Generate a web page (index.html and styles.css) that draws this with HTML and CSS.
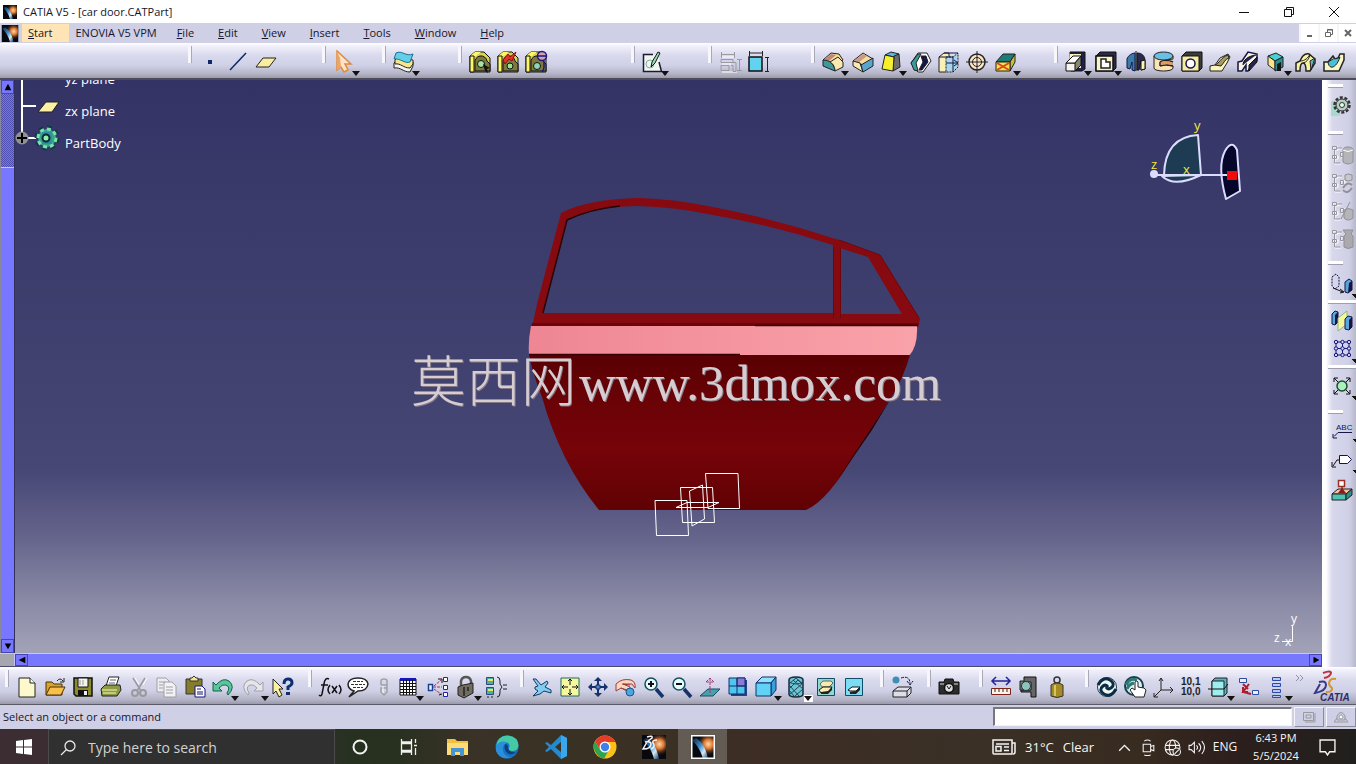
FILE: index.html
```html
<!DOCTYPE html>
<html lang="en">
<head>
<meta charset="utf-8">
<meta name="viewport" content="width=device-width, initial-scale=1">
<title>CATIA V5 - [car door.CATPart]</title>
<link rel="stylesheet" href="styles.css">
</head>
<body>
<svg class="defs" aria-hidden="true">
  <defs>
    <radialGradient id="flame" cx="0.72" cy="0.38" r="0.5">
      <stop offset="0" stop-color="#ffd9a8"/><stop offset="0.4" stop-color="#d9752f"/><stop offset="1" stop-color="#0a0c14" stop-opacity="0"/>
    </radialGradient>
    <linearGradient id="beam" x1="0" y1="0" x2="1" y2="1">
      <stop offset="0" stop-color="#0a1830"/><stop offset="0.45" stop-color="#3f8fd0"/><stop offset="0.7" stop-color="#d8ecf8"/><stop offset="1" stop-color="#11385c"/>
    </linearGradient>
    <symbol id="catia" viewBox="0 0 24 24">
      <path fill="#07090f" d="M0 0h24v24H0z"/>
      <path fill="url(#flame)" d="M0 0h24v24H0z"/>
      <path fill="url(#beam)" d="M1 5 5 3c6 4 10 10 12 21h-5C10 16 6 10 1 5z"/>
    </symbol>
    <symbol id="body-link" viewBox="0 0 24 24">
      <path d="M3 4h5v3H3zM3 13h5v3H3zM5 8v13h6M8 6h4M11 10h4v4h-4z" fill="none" stroke="#fff"/>
      <path d="M2.500 3.500h4v3h-4zM2.500 12.500h4v3h-4zM4.500 7v13h6M7 5h5M10.500 9.500h3v4h-3z" fill="none" stroke="#96969c"/>
    </symbol>
    <symbol id="cube-gold" viewBox="0 0 24 24">
      <path d="M2 6l5-4h9l6 6v14H2z" fill="#d8d252" stroke="#111"/>
      <path d="M2 6l5-4h6l-5 4z" fill="#fdf66a"/><path d="M2 6h4v16H2z" fill="#fdf66a" stroke="#111"/>
      <path d="M7 21V13a6 6 0 0 1 12-2l3 3v7z" fill="#7d783c" stroke="#111"/>
    </symbol>
  </defs>
</svg>

<header class="title-bar">
  <svg class="app-icon" viewBox="0 0 24 24"><use href="#catia"/></svg>
  <h1 class="title">CATIA V5 - [car door.CATPart]</h1>
  <div class="window-buttons">
    <button class="window-button" aria-label="Minimize"><svg viewBox="0 0 12 12"><path d="M1 6.500h10" stroke="#111" fill="none"/></svg></button>
    <button class="window-button" aria-label="Restore"><svg viewBox="0 0 12 12"><path d="M1.500 3.500h7v7h-7zM3.500 3V1.500h7v7H9" stroke="#111" fill="none"/></svg></button>
    <button class="window-button" aria-label="Close"><svg viewBox="0 0 12 12"><path d="M1 1l10 10M11 1L1 11" stroke="#111" fill="none"/></svg></button>
  </div>
</header>

<nav class="menu-bar" aria-label="Menu">
  <svg class="menu-icon" viewBox="0 0 24 24"><use href="#catia"/></svg>
  <button class="menu menu-start"><u>S</u>tart</button>
  <button class="menu menu-vpm">ENOVIA V5 VPM</button>
  <button class="menu"><u>F</u>ile</button>
  <button class="menu"><u>E</u>dit</button>
  <button class="menu"><u>V</u>iew</button>
  <button class="menu"><u>I</u>nsert</button>
  <button class="menu"><u>T</u>ools</button>
  <button class="menu"><u>W</u>indow</button>
  <button class="menu"><u>H</u>elp</button>
  <div class="document-buttons">
    <button class="document-button" aria-label="Minimize document"><svg viewBox="0 0 10 10"><path d="M2 8h5" stroke="#666" stroke-width="2"/></svg></button>
    <button class="document-button" aria-label="Restore document"><svg viewBox="0 0 10 10"><path d="M1.500 4.500h5v4h-5zM3.500 4V1.500h5v5H7M3 2h6" stroke="#666" fill="none"/></svg></button>
    <button class="document-button" aria-label="Close document"><svg viewBox="0 0 10 10"><path d="M2 2l6 6M8 2L2 8" stroke="#666" stroke-width="2"/></svg></button>
  </div>
</nav>

<div class="toolbar toolbar-top" role="toolbar" aria-label="Part design">
  <div class="group">
    <button class="tool" aria-label="Point"><svg viewBox="0 0 24 24"><path d="M10 10h4v4h-4z" fill="#0b2a66"/></svg></button>
    <button class="tool" aria-label="Line"><svg viewBox="0 0 24 24"><path d="M4 20 20 3" stroke="#0b2a66" stroke-width="1.500"/></svg></button>
    <button class="tool" aria-label="Plane"><svg viewBox="0 0 24 24"><path d="M2 17 9 8h13l-7 9z" fill="#f8eda0" stroke="#222"/></svg></button>
  </div>
  <div class="group">
    <button class="tool drop" aria-label="Select"><svg viewBox="0 0 24 24"><path d="M5 1v19l4-3 3 5 4-2-3-6h6z" fill="#fbe3cc" stroke="#e08a3c" stroke-width="1.500"/><path d="M5 1v19l4-3-1-9z" fill="#f0a464"/></svg></button>
  </div>
  <div class="group">
    <button class="tool drop" aria-label="Geometrical set"><svg viewBox="0 0 24 24"><path d="M2 13l3-3 16 2v4l-3 6c-7 0-9-5-16-4z" fill="#f4f4ec" stroke="#222"/><path d="M3 10l2-2 16 2v4l-3 4c-7 0-9-5-15-4z" fill="#f8e48a" stroke="#222"/><path d="M4 3c6-3 10 4 17 1l-3 8C13 14 8 8 2 9z" fill="#62d0ea" stroke="#1c6f8c"/></svg></button>
  </div>
  <div class="group">
    <button class="tool" aria-label="Link"><svg viewBox="0 0 24 24"><use href="#cube-gold"/><circle cx="13" cy="14" r="3.500" fill="#a5e3a0" stroke="#111"/><path d="M15 14l7 4-3 1 1 4-3-2z" fill="#111"/></svg></button>
    <button class="tool" aria-label="Unlink"><svg viewBox="0 0 24 24"><use href="#cube-gold"/><path d="M7 10l5-6 2 3 6-5-4 9-3-2-4 5z" fill="#e3342b" stroke="#8c1210"/><circle cx="14" cy="16" r="3" fill="#9be28c" stroke="#111"/></svg></button>
    <button class="tool" aria-label="Browse link"><svg viewBox="0 0 24 24"><use href="#cube-gold"/><circle cx="13" cy="16" r="3.500" fill="#8fd5b8" stroke="#111"/><circle cx="18" cy="6" r="4.500" fill="#d0a0ac" stroke="#181880" stroke-width="1.500"/><path d="M14 6h8M20 11v6q0 3-2 5" fill="none" stroke="#181880" stroke-width="1.500"/></svg></button>
  </div>
  <div class="group">
    <button class="tool drop" aria-label="Sketch"><svg viewBox="0 0 24 24"><path d="M2.500 4.500h15l3 17h-18z" fill="#f1f5f0"/><path d="M12 4.500H2.500v17h18L18 12" fill="none" stroke="#1b1b2e" stroke-width="1.500"/><circle cx="9" cy="14" r="4" fill="none" stroke="#7fae9b"/><path d="M10 17l1-5 6-10 2 1-5 10z" fill="#9db" stroke="#111"/></svg></button>
  </div>
  <div class="group">
    <button class="tool" aria-label="Measure set" disabled><svg viewBox="0 0 24 24"><path d="M3 7h13M4 14h9M4 22h15" stroke="#fff"/><path d="M3.500 2v6M16.500 2v6M3 4.500h13M3 9.500h12v3H3zM3 15.500h8v5H3zM13 12.500h5v9h-3v-6h-2M21.500 9v12M19 9.500h5M19 20.500h5" fill="none" stroke="#99999f"/></svg></button>
    <button class="tool" aria-label="Dimension"><svg viewBox="0 0 24 24"><path d="M3 3h13M3.500 1v5M16.500 1v5M21.500 7v14M19 7.500h4M19 21.500h4" stroke="#222" fill="none"/><path d="M3 7h13v14H3z" fill="#62d3ee" stroke="#111" stroke-width="1.500"/></svg></button>
  </div>
  <div class="group">
    <button class="tool drop" aria-label="Edge fillet"><svg viewBox="0 0 24 24"><path d="M2 10l8-7 8 1 4 6-8 4z" fill="#f8d99a" stroke="#222"/><path d="M3 10l7-6 5 1-7 6z" fill="#b9897e"/><path d="M2 10c6 0 11 3 12 11L2 16z" fill="#3c9a9c" stroke="#222"/><path d="M14 21c0-5-3-8-5-9l8-5 5 5v5z" fill="#f8e9b0" stroke="#222"/></svg></button>
    <button class="tool" aria-label="Chamfer"><svg viewBox="0 0 24 24"><path d="M2 11 12 3l10 6-10 6z" fill="#f8dc9c" stroke="#222"/><path d="M3 11l9-7 4 2-9 7z" fill="#c99a85"/><path d="M2 11l7 2 3 9-10-6z" fill="#fbe9b4" stroke="#222"/><path d="M10 15l12-7v8l-10 6z" fill="#58a6cf" stroke="#222"/></svg></button>
    <button class="tool drop" aria-label="Draft angle"><svg viewBox="0 0 24 24"><path d="M6 5l6-3 8 2-5 3z" fill="#58b8e4" stroke="#222"/><path d="M15 6l5-2 1 13-7 4z" fill="#6c6c6c" stroke="#222"/><path d="M6 5l9 2-1 14-11-2z" fill="#f6ef2c" stroke="#222"/></svg></button>
    <button class="tool" aria-label="Shell"><svg viewBox="0 0 24 24"><path d="M2 13 9 3h9l4 8-8 11H9z" fill="#fff" stroke="#222"/><path d="M2 13l7-9h3l-5 9 2 8-4-1z" fill="#3b9c9c" stroke="#222"/><path d="M12 6h5l2 6-6 8h-3l4-8z" fill="#15154a" stroke="#222"/></svg></button>
    <button class="tool" aria-label="Thickness"><svg viewBox="0 0 24 24"><path d="M2 7l5-4h5v15l-3 4H2z" fill="#f8efb4" stroke="#222"/><path d="M9 7h7l5-4v14l-5 5H9z" fill="#a9d4ea" stroke="#222" stroke-dasharray="2 1"/><path d="M2 7h14v15M7 3h14M9 13h11M17 10l4 3-4 3" fill="none" stroke="#15154a"/></svg></button>
    <button class="tool" aria-label="Thread"><svg viewBox="0 0 24 24"><circle cx="12" cy="12" r="8" fill="#fbe6c8" stroke="#222" stroke-width="1.500"/><circle cx="12" cy="12" r="4.500" fill="none" stroke="#222"/><path d="M12 1v22M1 12h22" stroke="#222"/></svg></button>
    <button class="tool drop" aria-label="Remove face"><svg viewBox="0 0 24 24"><path d="M3 12l7-8h12l-5 8z" fill="#1f7b78" stroke="#222"/><path d="M17 12l5-8v8l-5 9z" fill="#c9c034" stroke="#222"/><path d="M3 12h14v9H3z" fill="#fbe14c" stroke="#222"/><path d="M4 13l12 7M16 13L4 20" stroke="#d84a1c" stroke-width="2"/></svg></button>
  </div>
  <div class="group">
    <button class="tool drop" aria-label="Pad"><svg viewBox="0 0 24 24"><path d="M6 2h15v17l-3 2H7z" fill="#20204e" stroke="#111"/><path d="M6 4h11v14H6z" fill="#fbf3c0"/><path d="M2 13h9l6-6v8l-6 6H2z" fill="#f5f4ee" stroke="#111"/><path d="M2 13l7-7h8l-6 7z" fill="#fff" stroke="#111"/><path d="M11 13l6-7v9l-6 6z" fill="#888872" stroke="#111"/></svg></button>
    <button class="tool drop" aria-label="Pocket"><svg viewBox="0 0 24 24"><path d="M2 6l4-4h16v16l-3 3H2z" fill="#2a2a48" stroke="#111"/><path d="M2 6h17v15H2z" fill="#fbf3c0" stroke="#111" stroke-width="1.500"/><path d="M7 9h5v3h4v6H7z" fill="#fff" stroke="#222" stroke-width="1.500"/></svg></button>
    <button class="tool" aria-label="Shaft"><svg viewBox="0 0 24 24"><path d="M3 9c1-4 6-6 8-6v18l-3-1v-8l-2 7-3-1z" fill="#3a7ca8" stroke="#15154a"/><path d="M13 3c5 0 8 3 8 8v8l-4 1v-9l-2 9h-2z" fill="#2a2a50" stroke="#111"/><path d="M17 11l4-1v9l-4 1z" fill="#fff3b8" stroke="#111"/><path d="M12 1v20" stroke="#111"/></svg></button>
    <button class="tool" aria-label="Groove"><svg viewBox="0 0 24 24"><path d="M2 6v12c0 4 19 4 19 0v-2l-6-1v-5l6-1V6z" fill="#fbe3b4" stroke="#222"/><ellipse cx="11.500" cy="6" rx="9.500" ry="4" fill="#69bfe6" stroke="#222"/><path d="M8 12c3-2 9-2 13 0M8 16c3-1 9-1 13 0M8 12v4" fill="none" stroke="#222" stroke-width="1.500"/><path d="M9 12c3-1 8-1 12 1v2c-4-1-9-1-12 0z" fill="#e59a58"/></svg></button>
    <button class="tool" aria-label="Hole"><svg viewBox="0 0 24 24"><path d="M2 6l4-4h16v16l-3 3H2z" fill="#3b3b3b" stroke="#111"/><path d="M2 6h17v15H2z" fill="#f8eca4" stroke="#111"/><circle cx="10.500" cy="13.500" r="4.500" fill="#fff" stroke="#15154a" stroke-width="1.500"/></svg></button>
    <button class="tool" aria-label="Rib"><svg viewBox="0 0 24 24"><path d="M2 21v-5l5-1 5-7 8-4 2 3-3 6-5 8z" fill="#fbf3bc" stroke="#222"/><path d="M7 15c4-1 6-8 13-10l1 3c-4 1-5 5-8 8z" fill="#a59a60" stroke="#222"/></svg></button>
    <button class="tool" aria-label="Slot"><svg viewBox="0 0 24 24"><path d="M2 21v-9l4-1 6-9 9 2v6l-5 4-4 7h-2v-6l-4 6z" fill="#f8f4e0" stroke="#15154a" stroke-width="1.500"/><path d="M7 15c0-5 5-9 13-10M13 15l8-8v5l-8 9z" fill="#242452" stroke="#111"/></svg></button>
    <button class="tool drop" aria-label="Solid combine"><svg viewBox="0 0 24 24"><path d="M4 6l8-3 7 4-8 4z" fill="#45d1d4" stroke="#222"/><path d="M4 6l7 5v9l-7-5z" fill="#f7e58c" stroke="#222"/><path d="M11 11l8-4v10l-8 4z" fill="#2c8f92" stroke="#222"/><path d="M13 14l4-2v9h-4z" fill="#151515"/></svg></button>
    <button class="tool" aria-label="Multi-section solid"><svg viewBox="0 0 24 24"><path d="M2 21V13l4-2c2-5 5-8 9-7l6 5v4l-5 8h-4c0-5-1-8-3-8s-3 3-3 8z" fill="#fbf3a0" stroke="#222" stroke-width="1.500"/><path d="M16 11l5-3-4 12z" fill="#58bcd0" stroke="#222"/><path d="M6 11c5 0 8-3 10-7M9 13q5-1 7-8" fill="none" stroke="#222"/></svg></button>
    <button class="tool" aria-label="Removed multi-section"><svg viewBox="0 0 24 24"><path d="M2 21V12h4l5-6 2 3 3-1 2-4h4v6l-5 11z" fill="#fbf6c8" stroke="#222" stroke-width="1.500"/><path d="M6 12c1 8 8 7 12-5-4 3-6 1-7 2z" fill="#48c1d8" stroke="#222"/></svg></button>
  </div>
</div>

<main class="workspace">
  <div class="scroll scroll-v">
    <button class="scroll-button" aria-label="Scroll up"><svg viewBox="0 0 12 12"><path d="M6 2l4 8H2z"/></svg></button>
    <div class="trough"></div>
    <div class="thumb"></div>
    <button class="scroll-button" aria-label="Scroll down"><svg viewBox="0 0 12 12"><path d="M6 10L2 3h8z"/></svg></button>
  </div>

  <section class="viewport" aria-label="Part view">
    <svg class="scene" viewBox="15 80 1307 573" role="img" aria-label="Car door model">
      <defs>
        <linearGradient id="panel" x1="0" y1="355" x2="0" y2="510" gradientUnits="userSpaceOnUse">
          <stop offset="0" stop-color="#580003"/><stop offset="0.25" stop-color="#680206"/><stop offset="0.6" stop-color="#760409"/><stop offset="1" stop-color="#600104"/>
        </linearGradient>
        <linearGradient id="belt"><stop offset="0" stop-color="#ee8693"/><stop offset="1" stop-color="#faa2a9"/></linearGradient>
      </defs>
      <path fill="#870a10" fill-rule="evenodd" d="M561 213Q588 199 639 198Q675 199 713 207Q775 219 839 240L880 255L920 319L918 327H532L538 300ZM568 219L543 313H833V245Q775 226 713 215Q675 207 639 206Q600 206 568 219ZM840 248V314H902L868 257Z"/>
      <path fill="none" stroke="#240408" stroke-width="1.500" d="M543 313L567 220Q590 209 620 206"/>
      <path fill="none" stroke="#6e070a" d="M839 240L880 255L919 318M840.500 248V318M833.500 246V318"/>
      <path fill="#6b0508" d="M532 323H919L918 327H531Z"/>
      <path fill="url(#belt)" d="M531 326H917Q918 346 909 356L529 355Q528 340 531 326Z"/>
      <path fill="url(#panel)" d="M529 354H740L740 355H910Q904 376 894 393L857 450Q829 500 806 510H599Q560 462 542 397Q532 372 529 354Z"/>
      <path fill="#2a0003" d="M893 395L860 445L836 482L872 430Z"/>
      <path fill="none" stroke="#340004" stroke-width="1.500" d="M529 354.500H740M755 325.500H917"/>
      <g fill="none" stroke="#fff">
        <path d="M655 500.500H687L688.500 535.500H656.500Z"/><path d="M680.500 487.500H712.500L714.500 522.500H682.500Z"/>
        <path d="M705.500 473.500H738L739.500 508.500H708Z"/><path d="M689.500 491L702.500 485L704.500 519L692 526Z"/><path d="M676 507.500L687 502.500H719L708 507.500Z"/>
      </g>
      <g stroke="#dcdcff" stroke-width="2" stroke-linejoin="round">
        <path fill="#1d3b52" d="M1164 175Q1165 137 1198 135L1201 175Z"/>
        <path fill="#1d3b52" d="M1162 176Q1174 188 1201 175Z"/>
        <path fill="#06062a" d="M1226 199Q1217 166 1225 151Q1232 139 1237 150L1240 191Z"/>
        <path d="M1154 175H1232"/>
      </g>
      <circle cx="1154" cy="174" r="4" fill="#dcdcff"/>
      <path fill="#f00b0b" d="M1227 171h10v9h-10z"/>
      <g class="compass-label"><text x="1194" y="130">y</text><text x="1151" y="169">z</text><text x="1183" y="174">x</text></g>
      <path fill="none" stroke="#fff" d="M1292.500 625V641.500H1282"/>
      <g class="axis-label"><text x="1291" y="623">y</text><text x="1274" y="642">z</text><text x="1285" y="646">x</text></g>
      <g class="watermark-shadow"><text x="412" y="402" class="watermark-cjk">莫西网</text><text x="580" y="401" class="watermark-latin">www.3dmox.com</text></g>
      <g class="watermark"><text x="411" y="401" class="watermark-cjk">莫西网</text><text x="579" y="400" class="watermark-latin">www.3dmox.com</text></g>
    </svg>
    <ul class="tree">
      <li class="node"><svg class="node-icon" viewBox="0 0 44 32"><path d="M5 0v32" stroke="#fff" stroke-width="2"/></svg>yz plane</li>
      <li class="node"><svg class="node-icon" viewBox="0 0 44 32"><path d="M5 0v32M5 11h14" stroke="#fff" stroke-width="2"/><path d="M21 17l8-10h13l-7 10z" fill="#fdf0a4" stroke="#222"/></svg>zx plane</li>
      <li class="node"><svg class="node-icon" viewBox="0 0 44 32"><path d="M5 0v12M5 11h14" stroke="#fff" stroke-width="2"/><circle cx="5" cy="11" r="6.500" fill="#8f8f94"/><path d="M5 6v10M0 11h10" stroke="#000" stroke-width="2"/><circle cx="30" cy="11" r="10" fill="none" stroke="#0c3c46" stroke-width="5" stroke-dasharray="4.500 3.300"/><circle cx="30" cy="11" r="9" fill="#37a586" stroke="#7ee0b0" stroke-width="3" stroke-dasharray="4 3"/><path d="M25 5h10v12H25z" fill="#2d8fa0"/><circle cx="29" cy="11" r="3.500" fill="#8ff0b0" stroke="#0b2c33" stroke-width="2"/></svg>PartBody</li>
    </ul>
  </section>

  <aside class="side-bar" aria-label="Body tools">
    <div class="side-group side-gear"><button class="side-tool" aria-label="Part body"><svg viewBox="0 0 24 24"><path d="M1 7h9v15H1z" fill="#a9d8cf"/><circle cx="12" cy="11" r="7.500" fill="none" stroke="#333" stroke-width="2.500" stroke-dasharray="3 1.700"/><circle cx="12" cy="11" r="6" fill="#b9c9c4" stroke="#333"/><circle cx="12" cy="11" r="2.500" fill="#dfe" stroke="#333"/></svg></button></div>
    <div class="side-group side-boolean">
      <button class="side-tool" aria-label="Assemble" disabled><svg viewBox="0 0 24 24"><use href="#body-link"/><path d="M13 7q0-3 5-3t5 3v12q-5 4-10 0z" fill="#b5b5b9" stroke="#8f8f94"/><path d="M13 7q5 3 10 0" fill="none" stroke="#fff"/></svg></button>
      <button class="side-tool" aria-label="Add" disabled><svg viewBox="0 0 24 24"><use href="#body-link"/><path d="M15 4q3-2 7 0v5q-4 2-7 0z" fill="#c9c9cd" stroke="#8f8f94"/><path d="M13 17q4-7 9-3M22 17q-5 7-9 2" fill="none" stroke="#8f8f94" stroke-width="2"/></svg></button>
      <button class="side-tool" aria-label="Remove" disabled><svg viewBox="0 0 24 24"><use href="#body-link"/><path d="M14 11q5-3 9 0v8q-5 4-9 0zM11 20L20 3" fill="#b5b5b9" stroke="#8f8f94"/></svg></button>
      <button class="side-tool" aria-label="Union trim" disabled><svg viewBox="0 0 24 24"><use href="#body-link"/><path d="M13 3h10l-2 4 2 2v11q-5 3-9 0V9l2-2z" fill="#aaaaae" stroke="#8f8f94"/></svg></button>
    </div>
    <div class="side-group side-translate"><button class="side-tool side-drop" aria-label="Translation"><svg viewBox="0 0 24 24"><path d="M2 5l4-3 3 3v9l-4 3-3-3z" fill="none" stroke="#15154a" stroke-dasharray="2 1"/><path d="M3 16l10 4M10 17l4 3-4 1" fill="none" stroke="#111"/><path d="M15 10l4-3 3 2v9l-4 3-3-1z" fill="#58a6de" stroke="#15154a"/><path d="M19 11l3-2v9l-4 3z" fill="#15153e"/></svg></button></div>
    <div class="side-group side-pattern">
      <button class="side-tool" aria-label="Mirror"><svg viewBox="0 0 24 24"><path d="M2 5l3-3 3 1v10l-3 3-3-1z" fill="#58a6de" stroke="#15154a"/><path d="M5 6l3-3v10l-3 3z" fill="#15153e"/><path d="M8 9l9-7v13l-9 7z" fill="#f5f7a0" stroke="#8bb57c"/><path d="M15 10l3-3 4 1v10l-3 3-4-1z" fill="#58a6de" stroke="#15154a"/><path d="M19 11l3-3v10l-3 3z" fill="#15153e"/></svg></button>
      <button class="side-tool side-drop" aria-label="Rectangular pattern"><svg viewBox="0 0 24 24"><path d="M5 5h15M5 11.500h15M5 18h15M6 4v15M12.500 4v15M19 4v15" stroke="#15157a"/><g fill="#cfd0ff" stroke="#15157a"><circle cx="6" cy="5" r="1.700"/><circle cx="12.500" cy="5" r="1.700"/><circle cx="19" cy="5" r="1.700"/><circle cx="6" cy="11.500" r="1.700"/><circle cx="12.500" cy="11.500" r="1.700"/><circle cx="19" cy="11.500" r="1.700"/><circle cx="6" cy="18" r="1.700"/><circle cx="12.500" cy="18" r="1.700"/><circle cx="19" cy="18" r="1.700"/></g></svg></button>
    </div>
    <div class="side-group side-scale"><button class="side-tool side-drop" aria-label="Scaling"><svg viewBox="0 0 24 24"><path d="M4 4l16 16M20 4L4 20M4 8V4h4M16 4h4v4M20 16v4h-4M8 20H4v-4" stroke="#111" fill="none"/><circle cx="12" cy="12" r="5" fill="#a9f0bc" stroke="#1d4a2e" stroke-width="1.500"/></svg></button></div>
    <div class="side-group side-note">
      <button class="side-tool side-drop" aria-label="Text with leader"><svg viewBox="0 0 24 24"><text x="6" y="13" class="icon-abc">ABC</text><path d="M22 15.500H8l-4 4M3 17v4h4" stroke="#15154a" fill="none"/></svg></button>
      <button class="side-tool side-drop" aria-label="Flag note"><svg viewBox="0 0 24 24"><path d="M9.500 7.500h8l4 4-4 4h-8z" fill="#fff" stroke="#15154a"/><path d="M9 12H7l-4 6M2 14v5h4" stroke="#111" fill="none"/></svg></button>
      <button class="side-tool" aria-label="Apply material"><svg viewBox="0 0 24 24"><path d="M2 15l6-5h14l-6 5z" fill="#f8c0a4" stroke="#222"/><path d="M2 15h14v6H2z" fill="#4dc3b5" stroke="#222"/><path d="M16 15l6-5v6l-6 5z" fill="#2b8e88" stroke="#222"/><path d="M8.500 1.500h6v6h-6zM12 8v3" fill="#fff" stroke="#9a3028" stroke-width="1.500"/><path d="M8 14h8l-4-5z" fill="#8c1c14"/></svg></button>
    </div>
  </aside>

  <div class="scroll scroll-h">
    <span class="corner"></span>
    <button class="scroll-button" aria-label="Scroll left"><svg viewBox="0 0 12 12"><path d="M2 6l8-4v8z"/></svg></button>
    <div class="thumb"></div>
    <button class="scroll-button" aria-label="Scroll right"><svg viewBox="0 0 12 12"><path d="M10 6L3 2v8z"/></svg></button>
  </div>
</main>

<div class="toolbar toolbar-bottom" role="toolbar" aria-label="Standard">
  <div class="group">
    <button class="tool" aria-label="New"><svg viewBox="0 0 24 24"><path d="M4 3h11l5 5v14H4z" fill="#fdf9cc" stroke="#222"/><path d="M15 3v5h5" fill="#fff" stroke="#222"/></svg></button>
    <button class="tool" aria-label="Open"><svg viewBox="0 0 24 24"><path d="M3 20V7h6l2 2h8v11z" fill="#d9a32c" stroke="#4a3208"/><path d="M3 20l4-8h15l-4 8z" fill="#f8c04a" stroke="#4a3208"/><path d="M14 6q3-4 6 0M21 3v4h-4" fill="none" stroke="#222"/></svg></button>
    <button class="tool" aria-label="Save"><svg viewBox="0 0 24 24"><path d="M3 3h18v18H5l-2-2z" fill="#8c8a2e" stroke="#111" stroke-width="1.500"/><path d="M7 3h10v9H7z" fill="#f5f5f0" stroke="#111"/><path d="M9 5v5M12 5v5" stroke="#999"/><path d="M7 15h10v6H7z" fill="#111"/><path d="M13 16h3v4h-3z" fill="#eee"/></svg></button>
    <button class="tool" aria-label="Print"><svg viewBox="0 0 24 24"><path d="M7 11l3-9h10l-3 9z" fill="#fff" stroke="#222"/><path d="M11 5h6M10 8h6" stroke="#666"/><path d="M2 14l4-4h15l1 5-4 6H3z" fill="#8c9a44" stroke="#222"/><path d="M3 15h15M4 18h13" stroke="#fff8b0"/></svg></button>
    <button class="tool" aria-label="Cut" disabled><svg viewBox="0 0 24 24"><path d="M6 3l8 13M18 3l-8 13" stroke="#9a9a9e" stroke-width="1.500"/><circle cx="8" cy="18" r="3" fill="none" stroke="#9a9a9e" stroke-width="2"/><circle cx="16" cy="18" r="3" fill="none" stroke="#9a9a9e" stroke-width="2"/><path d="M8 3l4 6M20 3l-4 7" stroke="#fff"/></svg></button>
    <button class="tool" aria-label="Copy" disabled><svg viewBox="0 0 24 24"><path d="M2 3h9l3 3v11H2z" fill="#ececf2" stroke="#a0a0a4"/><path d="M9 7h8l4 4v11H9z" fill="#f2f2f6" stroke="#a0a0a4"/><path d="M4 7h6M4 10h4M4 13h4M11 12h7M11 15h7M11 18h7" stroke="#a0a0a4"/></svg></button>
    <button class="tool" aria-label="Paste"><svg viewBox="0 0 24 24"><path d="M3 4h16v15H3z" fill="#857c2c" stroke="#333"/><path d="M7 6V3h2l2-2 2 2h2v3z" fill="#f6e68c" stroke="#333"/><path d="M12 11h7l3 3v8H12z" fill="#fff" stroke="#15157a"/><path d="M14 14h4M14 17h6M14 19h6" stroke="#15157a"/></svg></button>
    <button class="tool drop" aria-label="Undo"><svg viewBox="0 0 24 24"><path d="M2 16V7l3 3q7-8 13-4 7 6-1 14-1-1-1-2 4-6-1-8-4-1-7 3l3 3z" fill="#58c69a" stroke="#15614a"/></svg></button>
    <button class="tool drop" aria-label="Redo" disabled><svg viewBox="0 0 24 24"><path d="M22 16V7l-3 3Q12 2 6 6q-7 6 1 14 1-1 1-2-4-6 1-8 4-1 7 3l-3 3z" fill="#e5e5ec" stroke="#a0a0a6"/></svg></button>
    <button class="tool" aria-label="What's this?"><svg viewBox="0 0 24 24"><path d="M2 4v15l3-3 3 6 3-2-3-6h4z" fill="#f8f2a0" stroke="#222"/><path d="M13 9q0-5 4-5t4 4q0 2-4 4v3" fill="none" stroke="#0c2f70" stroke-width="3"/><path d="M15 17h4v3h-4z" fill="#0c2f70"/></svg></button>
  </div>
  <div class="group">
    <button class="tool" aria-label="Formula"><svg viewBox="0 0 24 24"><path d="M11 4Q7 2 6 9L4 19q-1 3-3 1M3 10h7M12 10q-4 5 0 9M21 10q4 5 0 9M14 11l5 7M19 11l-5 7" fill="none" stroke="#111" stroke-width="1.500"/></svg></button>
    <button class="tool" aria-label="Comment"><svg viewBox="0 0 24 24"><path d="M3 22l5-6Q2 14 2 9q1-6 10-6t10 6q-1 7-10 7z" fill="#fff" stroke="#222" stroke-width="1.500"/><path d="M7 6.500h10M5 9.500h14M7 12.500h10" stroke="#333" stroke-dasharray="3 1"/></svg></button>
    <button class="tool narrow" aria-label="Lock parameter" disabled><svg viewBox="0 0 24 24"><path d="M9 10V6q0-2 3-2t3 2v4M9 10h6v7l-3 3-3-3v-4h6" fill="none" stroke="#a0a0a6" stroke-width="1.500"/><path d="M11 11v7" stroke="#fff"/></svg></button>
    <button class="tool drop" aria-label="Design table"><svg viewBox="0 0 24 24"><path d="M4 4h16v16H4z" fill="#fff" stroke="#111"/><path d="M4 3h16v3H4z" fill="#1616b8"/><path d="M4 8.500h16M4 11.500h16M4 14.500h16M4 17.500h16M7.500 5v15M10.500 5v15M13.500 5v15M16.500 5v15" stroke="#111"/></svg></button>
    <button class="tool" aria-label="Knowledge inspector"><svg viewBox="0 0 24 24"><path d="M2.500 9.500h4v6h-4z" fill="#dff" stroke="#1e3d94" stroke-width="1.500"/><path d="M17.500 2.500h4v4h-4zM17.500 10.500h4v4h-4zM17.500 17.500h4v4h-4z" fill="#fff" stroke="#2222b8"/><path d="M7 12h9M8 11l7-6M8 14l7 5" stroke="#a03858" stroke-dasharray="3 1"/><path d="M12 4h4v4M13 20l3-1" stroke="#111" fill="none"/></svg></button>
    <button class="tool drop" aria-label="Lock"><svg viewBox="0 0 24 24"><path d="M7 11V6q1-4 5-4t5 4v4" fill="none" stroke="#555" stroke-width="2.500"/><path d="M4 12l5-2 10-2v10l-9 5-6-3z" fill="#706c60" stroke="#222"/><path d="M10 12v9M14 12v4" stroke="#222" stroke-width="1.500"/></svg></button>
    <button class="tool" aria-label="Equivalent dimensions"><svg viewBox="0 0 24 24"><path d="M2.500 2.500h7v7h-7zM2.500 12.500h7v7h-7z" fill="#45b39b" stroke="#2c4a7c"/><path d="M4 5h5M4 15h5" stroke="#f1e26a" stroke-width="2"/><path d="M3 22h2M7 22h2M13 2q3 0 3 4v3l2 3-2 3v3q0 4-3 4M19 10h4M19 14h4" fill="none" stroke="#222"/></svg></button>
  </div>
  <div class="group">
    <button class="tool" aria-label="Fly mode"><svg viewBox="0 0 24 24"><path d="M3 4h3l5 6 6-4 1 2-3 4 6 3v3l-7-2-4 3-7 2 5-5-3-2v-2l3-1z" fill="#83ccf0" stroke="#123c64"/></svg></button>
    <button class="tool" aria-label="Fit all in"><svg viewBox="0 0 24 24"><path d="M3 3h18v18H3z" fill="#f6f8a0" stroke="#1e6a58"/><path d="M12 4v6M12 14v6M4 12h6M14 12h6M10 6l2-2 2 2M10 18l2 2 2-2M6 10l-2 2 2 2M18 10l2 2-2 2" stroke="#111" fill="none"/></svg></button>
    <button class="tool" aria-label="Pan"><svg viewBox="0 0 24 24"><path d="M12 3v18M3 12h18" stroke="#15336a" stroke-width="2"/><path d="M12 2l4 4H8zM12 22l4-4H8zM2 12l4-4v8zM22 12l-4-4v8z" fill="#15336a"/><path d="M10 10h4v4h-4z" fill="#4a8acb" stroke="#15336a"/></svg></button>
    <button class="tool" aria-label="Rotate"><svg viewBox="0 0 24 24"><path d="M2 9Q8 3 17 5q5 2 4 8l-3-4H9l7 3v4l-9-3-5 3z" fill="#fbd7c0" stroke="#9a3c38"/><path d="M8 9l8 1M7 13l6 3" stroke="#9a3c38"/><circle cx="16" cy="17" r="4" fill="#4da5de" stroke="#15588a"/></svg></button>
    <button class="tool" aria-label="Zoom in"><svg viewBox="0 0 24 24"><path d="M14 14l7 8" stroke="#15336a" stroke-width="3.500"/><circle cx="9" cy="9" r="6" fill="#e8fbff" stroke="#15505c" stroke-width="1.500"/><path d="M6 9h6M9 6v6" stroke="#111" stroke-width="2"/></svg></button>
    <button class="tool" aria-label="Zoom out"><svg viewBox="0 0 24 24"><path d="M14 14l7 8" stroke="#15336a" stroke-width="3.500"/><circle cx="9" cy="9" r="6" fill="#e8fbff" stroke="#15505c" stroke-width="1.500"/><path d="M6 9h6" stroke="#111" stroke-width="2"/></svg></button>
    <button class="tool" aria-label="Normal view"><svg viewBox="0 0 24 24"><path d="M2 21l8-7h12l-7 7z" fill="#4aa0aa" stroke="#134c66"/><path d="M12 18V4M8 7l4-4 4 4z" stroke="#9c3c78" fill="none" stroke-dasharray="3 1"/></svg></button>
    <button class="tool" aria-label="Multi-view"><svg viewBox="0 0 24 24"><path d="M5 5h16v16H5z" fill="#23438c"/><path d="M3 3h16v16H3z" fill="#50c5ee" stroke="#12306a"/><path d="M11 3h8v8h-8z" fill="#8b7ad8" stroke="#12306a"/><path d="M11 3v16M3 11h16" stroke="#12306a"/></svg></button>
    <button class="tool drop" aria-label="Isometric view"><svg viewBox="0 0 24 24"><path d="M2 8l6-6h14l-5 6z" fill="#90e2fb" stroke="#12306a"/><path d="M17 8l5-6v13l-5 6z" fill="#3aa0d8" stroke="#12306a"/><path d="M2 8h15v13H2z" fill="#60d2f6" stroke="#12306a"/></svg></button>
    <button class="tool drop drop-lit" aria-label="Shading mode"><svg viewBox="0 0 24 24"><path d="M5 5q0-3 7-3t7 3v14q0 3-7 3t-7-3z" fill="#6cc4d4" stroke="#172c3c" stroke-width="1.500"/><path d="M5 7q7 4 14 0M5 9l7-6 7 6M5 14l9-9 5 5M5 20L19 8M5 10l10 11M5 15l5 6M9 5l10 9M19 14l-8 7" fill="none" stroke="#24485a"/></svg></button>
    <button class="tool" aria-label="Hide/Show"><svg viewBox="0 0 24 24"><path d="M3.500 3.500h17v17h-17z" fill="#8fd8d4" stroke="#134c66"/><path d="M6 9l3-3h8l2 2-4 4H8z" fill="#f6eaac" stroke="#666"/><path d="M5 15l4-3h9l-4 6H7z" fill="#f8efb0" stroke="#111"/><path d="M14 16l4-4v3l-4 4H7v-2z" fill="#222"/></svg></button>
    <button class="tool" aria-label="Swap visible space"><svg viewBox="0 0 24 24"><path d="M3.500 3.500h17v17h-17z" fill="#7bdcf4" stroke="#134c66"/><path d="M6 15l4-3h8l-4 4H8z" fill="#fff" stroke="#111"/><path d="M14 16l4-4v3l-4 4H8v-2z" fill="#222"/></svg></button>
  </div>
  <div class="group">
    <button class="tool" aria-label="Turntable"><svg viewBox="0 0 24 24"><circle cx="6" cy="5" r="3.500" fill="#3d90b4"/><path d="M11 3q9-3 9 6M17 6l3 4 3-4" fill="none" stroke="#15154a" stroke-dasharray="3 1"/><path d="M3 16h14v6H3zM3 16l5-4h13l-4 4M21 12v6l-4 4" fill="#dedee8" stroke="#222"/></svg></button>
  </div>
  <div class="group">
    <button class="tool" aria-label="Capture"><svg viewBox="0 0 24 24"><path d="M2 7h5l1-3h8l1 3h5v12H2z" fill="#2c2c2c" stroke="#111"/><circle cx="12" cy="13" r="4.500" fill="#ddd" stroke="#111" stroke-width="1.500"/><path d="M10 11l2 3 2-3" stroke="#111" fill="none"/><path d="M3 9h4M17 9h4" stroke="#ddd"/></svg></button>
  </div>
  <div class="group">
    <button class="tool" aria-label="Measure between"><svg viewBox="0 0 24 24"><path d="M3 6h18M7 2L3 6l4 4M17 2l4 4-4 4" stroke="#22229a" stroke-width="1.500" fill="none"/><path d="M2.500 13.500h19v6h-19z" fill="#fff4e8" stroke="#7c2418"/><path d="M6 14v3M10 14v3M14 14v3M18 14v3" stroke="#222"/></svg></button>
    <button class="tool" aria-label="Measure item"><svg viewBox="0 0 24 24"><path d="M7 2h12v20h-5v-5H4v-2h10V7H7z" fill="#666" stroke="#111"/><path d="M3 6h4v9H3z" fill="#777" stroke="#222"/><circle cx="9" cy="11" r="4.500" fill="#8ac6b8" stroke="#234"/></svg></button>
    <button class="tool" aria-label="Measure inertia"><svg viewBox="0 0 24 24"><circle cx="12" cy="5" r="3" fill="none" stroke="#333" stroke-width="1.500"/><path d="M6 10q6-4 12 0v11q-6 3-12 0z" fill="#a58b25" stroke="#333"/><path d="M10 10v11" stroke="#d9c45e" stroke-width="2"/></svg></button>
  </div>
  <div class="group">
    <button class="tool" aria-label="Update all"><svg viewBox="0 0 24 24"><circle cx="12" cy="12" r="9.500" fill="#eef6f4" stroke="#173c50"/><path d="M3 10q5-9 12-5 6 4 1 8-3 2-5-1M21 14q-5 9-12 5-6-4-1-8 3-2 5 1" fill="none" stroke="#0b2c44" stroke-width="3"/></svg></button>
    <button class="tool" aria-label="Manual update"><svg viewBox="0 0 24 24"><circle cx="11" cy="11" r="9" fill="#e4f0ee" stroke="#173c50" stroke-width="2"/><path d="M3 10q4-8 11-5M4 14q2-5 7-6" fill="none" stroke="#2c7c74" stroke-width="3"/><path d="M12 22l-5-7 2-2 3 2V7q2-2 3 0v5l6 1 2 2-2 7z" fill="#fff" stroke="#222"/></svg></button>
    <button class="tool" aria-label="Axis system"><svg viewBox="0 0 24 24"><path d="M10 3v12h12M10 15l-7 7M8 6l2-3 2 3M19 12l3 3-3 3M3 18v4h4" fill="none" stroke="#222"/></svg></button>
    <button class="tool" aria-label="Mean dimensions"><svg viewBox="0 0 24 24"><text x="2" y="10" class="icon-number">10,1</text><text x="2" y="20" class="icon-number">10,0</text></svg></button>
    <button class="tool drop" aria-label="Create datum"><svg viewBox="0 0 24 24"><path d="M5 6l3-3h12v15l-3 3H5z" fill="#58b0c4" stroke="#222"/><path d="M5 6h12v15H5z" fill="#9eeef0" stroke="#222"/><path d="M1 14h16l4-5" stroke="#111" fill="none"/></svg></button>
    <button class="tool" aria-label="Catalog"><svg viewBox="0 0 24 24"><path d="M2.500 3.500h7v4h-7zM15.500 15.500h6v4h-6z" fill="#eef" stroke="#2e4ca0"/><path d="M6 9l5 5M12 9l-6 8 8 2M6 12v5h5" fill="none" stroke="#b01c2c" stroke-width="2"/></svg></button>
    <button class="tool drop" aria-label="Constraints list"><svg viewBox="0 0 24 24"><path d="M7.500 2.500h8v3h-8zM7.500 8.500h8v3h-8zM7.500 14.500h8v3h-8zM7.500 20.500h8v2h-8z" fill="#b8c8f2" stroke="#2c4aa8"/></svg></button>
  </div>
  <div class="brand">
    <svg class="more" viewBox="0 0 10 10"><path d="M1 1l3 3-3 3M5 1l3 3-3 3" fill="none" stroke="#8f8fa4"/></svg>
    <svg class="brand-logo" viewBox="0 0 42 34" role="img" aria-label="CATIA"><path d="M12 3q8-3 8 0-1 4-7 5" fill="none" stroke="#c0303c" stroke-width="2"/><path d="M8 12q7-2 7 3 0 6-11 8l5-9" fill="none" stroke="#3a3a88" stroke-width="2"/><path d="M25 9q-6-1-7 4 0 3 3 5 1 4-6 4" fill="none" stroke="#d59628" stroke-width="2"/><text x="9" y="31" class="brand-text">CATIA</text></svg>
  </div>
</div>

<footer class="status-bar">
  <label for="command">Select an object or a command</label>
  <div class="command">
    <input id="command" class="command-input" type="text">
    <button class="command-button" aria-label="Power input" disabled><svg viewBox="0 0 16 12"><path d="M2.500 1.500h10v8h-10zM5 4h5v3H5zM14 2v9H4" fill="none" stroke="#99999f"/></svg></button>
    <button class="command-button" aria-label="Macro" disabled><svg viewBox="0 0 16 12"><path d="M1 11l3-4M15 11l-3-4M4 5q4-7 8 0v4H4zM1 11h14" fill="none" stroke="#99999f"/><circle cx="8" cy="6" r="2" fill="#fff" stroke="#99999f"/></svg></button>
  </div>
</footer>

<nav class="taskbar" aria-label="Taskbar">
  <button class="start" aria-label="Start menu"><svg viewBox="0 0 16 16"><path d="M0 2l7-1v6.500H0zM8 1l8-1v7.500H8zM0 8.500h7V15l-7-1zM8 8.500h8V16l-8-1z" fill="#fff"/></svg></button>
  <label class="search"><svg viewBox="0 0 16 16"><circle cx="10" cy="6" r="5" fill="none" stroke="#e8e8e8" stroke-width="1.300"/><path d="M6.500 9.500L1 15" stroke="#e8e8e8" stroke-width="1.300"/></svg><input class="search-input" type="text" placeholder="Type here to search" aria-label="Search"></label>
  <div class="apps">
    <button class="app" aria-label="Cortana"><svg viewBox="0 0 24 24"><circle cx="12" cy="12" r="6.500" fill="none" stroke="#f4f4f4" stroke-width="2"/></svg></button>
    <button class="app" aria-label="Task view"><svg viewBox="0 0 24 24"><path d="M4.500 4v3h10V4M4.500 20v-3h10v3M4.500 8.500h10v7h-10zM18.500 4v4M18.500 13v7M17 10.500h3" fill="none" stroke="#f0f0f0" stroke-width="1.300"/></svg></button>
    <button class="app" aria-label="File Explorer"><svg viewBox="0 0 24 24"><path d="M1 4h8l2 2h11v14H1z" fill="#f2bf43"/><path d="M1 8h21v12H1z" fill="#fddc78"/><path d="M5 13h13v8h-4v-4H9v4H5z" fill="#4693d8"/></svg></button>
    <button class="app" aria-label="Edge"><svg viewBox="0 0 24 24"><circle cx="12" cy="12" r="11.500" fill="#1672c4"/><path d="M1 11Q3 0 13 .5q10 1 10.500 10Q23 16 17 16q-4 0-3-3 2-5-4-6-6 0-9 4z" fill="#45c8a4"/><path d="M1 11q5-7 11-3-5 2-4 7 1 7 9 7Q5 26 1 16z" fill="#2b8ed8"/><path d="M13 13q0-4-3-4-2 7 4 10 4 1 7-2-7 1-8-4z" fill="#103f78"/></svg></button>
    <button class="app" aria-label="Visual Studio Code"><svg viewBox="0 0 24 24"><path d="M17 0l6 3v18l-6 3L7 14l-4 3-2-1 4-4-4-4 2-1 4 3zM17 7l-6 5 6 5z" fill="#2489cf" fill-rule="evenodd"/><path d="M17 0l6 3v18l-6 3z" fill="#3aa6ec"/></svg></button>
    <button class="app" aria-label="Chrome"><svg viewBox="0 0 24 24"><circle cx="12" cy="12" r="11.500" fill="#fbc116"/><path d="M2 6Q6 .5 12 .5T22 6v1H12l-5 8z" fill="#e33b2e"/><path d="M2 6q-3 6 1 12 3 5 8 5.500L16 15H7z" fill="#31a350"/><circle cx="12" cy="12" r="5.500" fill="#fff"/><circle cx="12" cy="12" r="4.200" fill="#3f7fe8"/></svg></button>
    <button class="app" aria-label="Dassault Systemes"><svg viewBox="0 0 24 24"><use href="#catia"/><path d="M5 2q6-2 5 1L6 6M5 7L1 14q8 0 8-5 0-3-6-2M15 5q-5 0-4 3 3 4-2 6" fill="none" stroke="#f4f4f4" stroke-width="1.500"/></svg></button>
    <button class="app app-active" aria-label="CATIA V5"><svg viewBox="0 0 24 24"><use href="#catia"/><path d="M.75.75h22.500v22.500H.75z" fill="none" stroke="#fff" stroke-width="1.500"/></svg></button>
  </div>
  <div class="tray">
    <button class="weather"><svg class="weather-icon" viewBox="0 0 24 16"><path d="M1 1h19v14H2q-1 0-1-1zM20 4h3v9q0 2-2 2M4 5h13M4 7.500h5v4.500H4zM12 8h5M12 11.500h5" fill="none" stroke="#f4f4f4" stroke-width="1.500"/></svg><span>31°C</span><span>Clear</span></button>
    <button class="tray-item" aria-label="Hidden icons"><svg viewBox="0 0 16 16"><path d="M3 11l5-5 5 5" fill="none" stroke="#f4f4f4" stroke-width="1.300"/></svg></button>
    <button class="tray-item" aria-label="Meet now"><svg viewBox="0 0 16 16"><path d="M3 5h7v7H3zM10 7l3-1v5l-3-1M4 2q3-2 6 0M4 15q3 1 6 0" fill="none" stroke="#f4f4f4"/></svg></button>
    <button class="tray-item" aria-label="Network"><svg viewBox="0 0 16 16"><circle cx="8" cy="8" r="7" fill="none" stroke="#f4f4f4"/><ellipse cx="8" cy="8" rx="3" ry="7" fill="none" stroke="#f4f4f4"/><path d="M1 6h14M1 10h14" stroke="#f4f4f4"/><circle cx="12" cy="12" r="3.500" fill="#332820" stroke="#f4f4f4"/><path d="M10 14l4-4" stroke="#f4f4f4"/></svg></button>
    <button class="tray-item" aria-label="Volume"><svg viewBox="0 0 16 16"><path d="M1 6h2l3-3v10l-3-3H1zM8 6q2 2 0 4M10 4q4 4 0 8M13 2q5 6 0 12" fill="none" stroke="#f4f4f4"/></svg></button>
    <button class="language">ENG</button>
    <button class="clock"><span>6:43 PM</span><span>5/5/2024</span></button>
    <button class="notice" aria-label="Notifications"><svg viewBox="0 0 16 16"><path d="M1 1h14v11H10l-2 3-2-3H1z" fill="none" stroke="#f4f4f4" stroke-width="1.300"/></svg></button>
  </div>
</nav>
</body>
</html>
```
FILE: styles.css
```css
* { box-sizing: border-box; }
body {
  margin: 0;
  min-height: 100vh;
  display: flex;
  flex-direction: column;
  font: 11px/16px "Open Sans", "Noto Sans", sans-serif;
  color: #16162a;
  background: #cfcfe6;
}
button, input { font: inherit; color: inherit; margin: 0; padding: 0; border: 0; background: none; border-radius: 0; }
svg { display: block; }
.defs { position: absolute; width: 0; height: 0; }

/* title and menu */
.title-bar { display: flex; align-items: center; height: 23px; background: #fff; padding-left: 3px; }
.app-icon { width: 14px; height: 14px; margin-right: 6px; }
.title { margin: 0; font-size: 11px; font-weight: 400; line-height: 16px; }
.window-buttons { display: flex; margin-left: auto; }
.window-button { width: 45px; height: 22px; display: grid; place-items: center; }
.window-button svg { width: 12px; height: 12px; }
.menu-bar { display: flex; align-items: center; height: 20px; }
.menu-icon { width: 18px; height: 17px; margin: 0 3px 0 1px; }
.menu { height: 18px; padding: 0 12px; line-height: 16px; white-space: nowrap; }
.menu-start { background: #ffe4b5; padding: 0 16px 0 6px; }
.menu-vpm { padding: 0 8px 0 7px; }
.document-buttons { display: flex; margin-left: auto; background: #f6f6fa; }
.document-button { width: 17px; height: 18px; margin-left: 2px; display: grid; place-items: center; background: #fff; }
.document-button svg { width: 10px; height: 10px; }

/* tool bars */
.toolbar {
  display: grid;
  align-items: center;
  background: linear-gradient(#fff, #f1f1fb 8%, #dadaee 35%, #cfcfe6 65%, #b4b4c6 88%, #9a9aac);
}
.toolbar-top {
  grid-template-columns: 134px 60px 76px 173px 77px 103px 243px 1fr;
  padding: 2px 0 0 188px;
  height: 37px;
  border-bottom: 2px solid #4c4c58;
}
.toolbar-bottom {
  grid-template-columns: 303px 212px 360px 47px 52px 106px 1fr auto;
  padding: 2px 0 0 5px;
  height: 38px;
  border-bottom: 1px solid #5a5a66;
}
.group { display: flex; align-self: stretch; align-items: center; }
.group::before {
  content: "";
  align-self: flex-start;
  width: 3px;
  height: 17px;
  margin: 1px 4px 0 0;
  background: #f6f6fc;
  border-right: 1px solid #a8a8b8;
}
.tool { position: relative; flex: none; width: 28px; height: 28px; display: grid; place-items: center; }
.tool svg { width: 24px; height: 24px; }
.drop { width: 30px; padding-right: 2px; }
.drop::after {
  content: "";
  position: absolute;
  right: 0;
  bottom: 0;
  border: 4px solid transparent;
  border-top: 5px solid #111;
  border-bottom: 0;
}
.drop-lit::before { content: ""; position: absolute; right: -1px; bottom: -1px; width: 9px; height: 7px; background: #fff; }
.narrow { width: 22px; }
.icon-number { font: 700 10px "Liberation Sans", sans-serif; fill: #222; }
.icon-abc { font: 8px "Liberation Sans", sans-serif; fill: #15154a; }
.brand { display: flex; align-items: center; padding-right: 3px; }
.more { width: 10px; height: 10px; margin: 0 6px 16px 0; }
.brand-logo { width: 42px; height: 34px; }
.brand-text { font: italic 700 10px "Liberation Sans", sans-serif; fill: #2c2c6e; }

/* work area */
.workspace {
  flex: 1;
  display: grid;
  grid-template-columns: 15px minmax(0, 1fr) 34px;
  grid-template-rows: minmax(0, 1fr) 14px;
  grid-template-areas: "v view side" "h h side";
}
.scroll { display: flex; background: #7777ff; }
.scroll-v { grid-area: v; flex-direction: column; border-left: 1px solid #88889a; border-right: 1px solid #30305c; }
.scroll-h { grid-area: h; border-top: 1px solid #c4c4ff; border-bottom: 1px solid #4a4a70; }
.scroll-button { flex: none; width: 13px; height: 14px; display: grid; place-items: center; border: 1px solid #4646b0; background: #7777ff; }
.scroll-h .scroll-button { height: 12px; }
.scroll-button svg { width: 10px; height: 10px; }
.trough { flex: 0 0 13%; border-bottom: 1px solid #c4c4ff; background: repeating-conic-gradient(#5050b4 0 25%, #7777dd 0 50%) 0 0 / 2px 2px; }
.thumb { flex: 1; background: #7777ff; }
.corner { width: 15px; background: #a6a6ae; border-right: 1px solid #c4c4ff; }
.viewport {
  grid-area: view;
  display: grid;
  overflow: hidden;
  background: linear-gradient(#333366 0%, #3b3b6b 25%, #424271 52%, #474776 68%, #62628a 79%, #8a8aa6 91%, #a2a2b8 100%);
}
.viewport > * { grid-area: 1 / 1; }
.scene { width: 100%; height: 100%; min-height: 0; }
.tree { margin: -17px 0 0; padding: 0 0 0 2px; list-style: none; align-self: start; }
.node { display: flex; height: 32px; line-height: 32px; color: #fff; font-size: 13px; }
.node-icon { flex: none; width: 44px; height: 32px; margin-right: 4px; overflow: visible; }
.compass-label { font: 13px "Open Sans", sans-serif; fill: #f2e93a; }
.axis-label { font: 12px "Open Sans", sans-serif; fill: #fff; }
.watermark { fill: #d6cdd2; }
.watermark-shadow { fill: #857a84; }
.watermark-cjk { font: 300 55px "Noto Sans CJK SC", sans-serif; }
.watermark-latin { font: 51px "Liberation Serif", serif; }

/* side bar */
.side-bar { grid-area: side; background: linear-gradient(90deg, #fff, #fff 12%, #d8d8ec 30%, #cfcfe6 80%, #b8b8cc); padding-left: 6px; }
.side-group { display: flex; flex-direction: column; }
.side-group::before { content: ""; flex: none; height: 3px; width: 15px; background: #fff; border-bottom: 1px solid #9e9eb0; }
.side-tool { position: relative; flex: none; width: 28px; height: 28px; display: grid; place-items: center; }
.side-tool svg { width: 24px; height: 24px; }
.side-drop { margin-bottom: 2px; }
.side-drop::after { content: ""; position: absolute; right: 0; bottom: 0; width: 4px; height: 4px; background: linear-gradient(to bottom left, #111 50%, transparent 50%); }
.side-gear { padding: 4px 0 11px; }
.side-gear::before { margin-bottom: 4px; }
.side-boolean::before { margin-bottom: 6px; }
.side-boolean { padding-bottom: 8px; }
.side-translate::before { margin-bottom: 5px; }
.side-pattern::before, .side-scale::before { width: 28px; margin-bottom: 3px; }
.side-scale { padding-bottom: 8px; }
.side-note { gap: 1px; }

/* status bar */
.status-bar { display: flex; align-items: center; justify-content: space-between; height: 24px; padding-left: 3px; }
.command { display: flex; width: 363px; gap: 2px; }
.command-input { flex: 1; height: 19px; min-width: 0; background: #fff; border: 1px solid #f4f4f8; border-top: 2px solid #77777f; border-left: 2px solid #77777f; }
.command-button { width: 30px; height: 20px; display: grid; place-items: center; border: 1px solid #f4f4fa; border-right-color: #8a8a98; border-bottom-color: #8a8a98; }
.command-button svg { width: 16px; height: 12px; }

/* task bar */
.taskbar {
  display: flex;
  height: 36px;
  color: #f6f6f6;
  background: linear-gradient(90deg, #3b2d31 0, #3b2d31 20%, #263120 26%, #28301f 29%, #3a3226 35%, #3a3024 50%, #3d2d25 56%, #3a3026 72%, #382b20 84%, #2c1f1d 91%, #211f1d 100%);
}
.start { flex: 0 0 48px; display: grid; place-items: center; }
.start svg { width: 16px; height: 16px; }
.search { flex: 0 0 287px; display: flex; align-items: center; gap: 12px; padding-left: 11px; background: #303030; border: 1px solid #4b4b4b; border-bottom: 0; }
.search svg { flex: none; width: 16px; height: 16px; }
.search-input { flex: 1; min-width: 0; height: 30px; font-size: 14px; }
.search-input::placeholder { color: #d2d2d2; opacity: 1; }
.apps { display: flex; }
.app { width: 49px; display: grid; place-items: center; }
.app svg { width: 24px; height: 24px; }
.app-active { background: #625c54; }
.tray { display: flex; align-items: center; margin-left: auto; padding-right: 20px; }
.weather { display: flex; align-items: center; gap: 9px; margin-right: 18px; font-size: 13px; white-space: nowrap; }
.weather-icon { width: 24px; height: 16px; }
.tray-item { width: 24px; height: 30px; display: grid; place-items: center; }
.tray-item svg { width: 17px; height: 17px; }
.language { width: 34px; font-size: 12px; text-align: center; }
.clock { width: 68px; font-size: 11px; line-height: 18px; display: flex; flex-direction: column; align-items: center; }
.notice { margin-left: 9px; }
.notice svg { width: 17px; height: 17px; }
```
